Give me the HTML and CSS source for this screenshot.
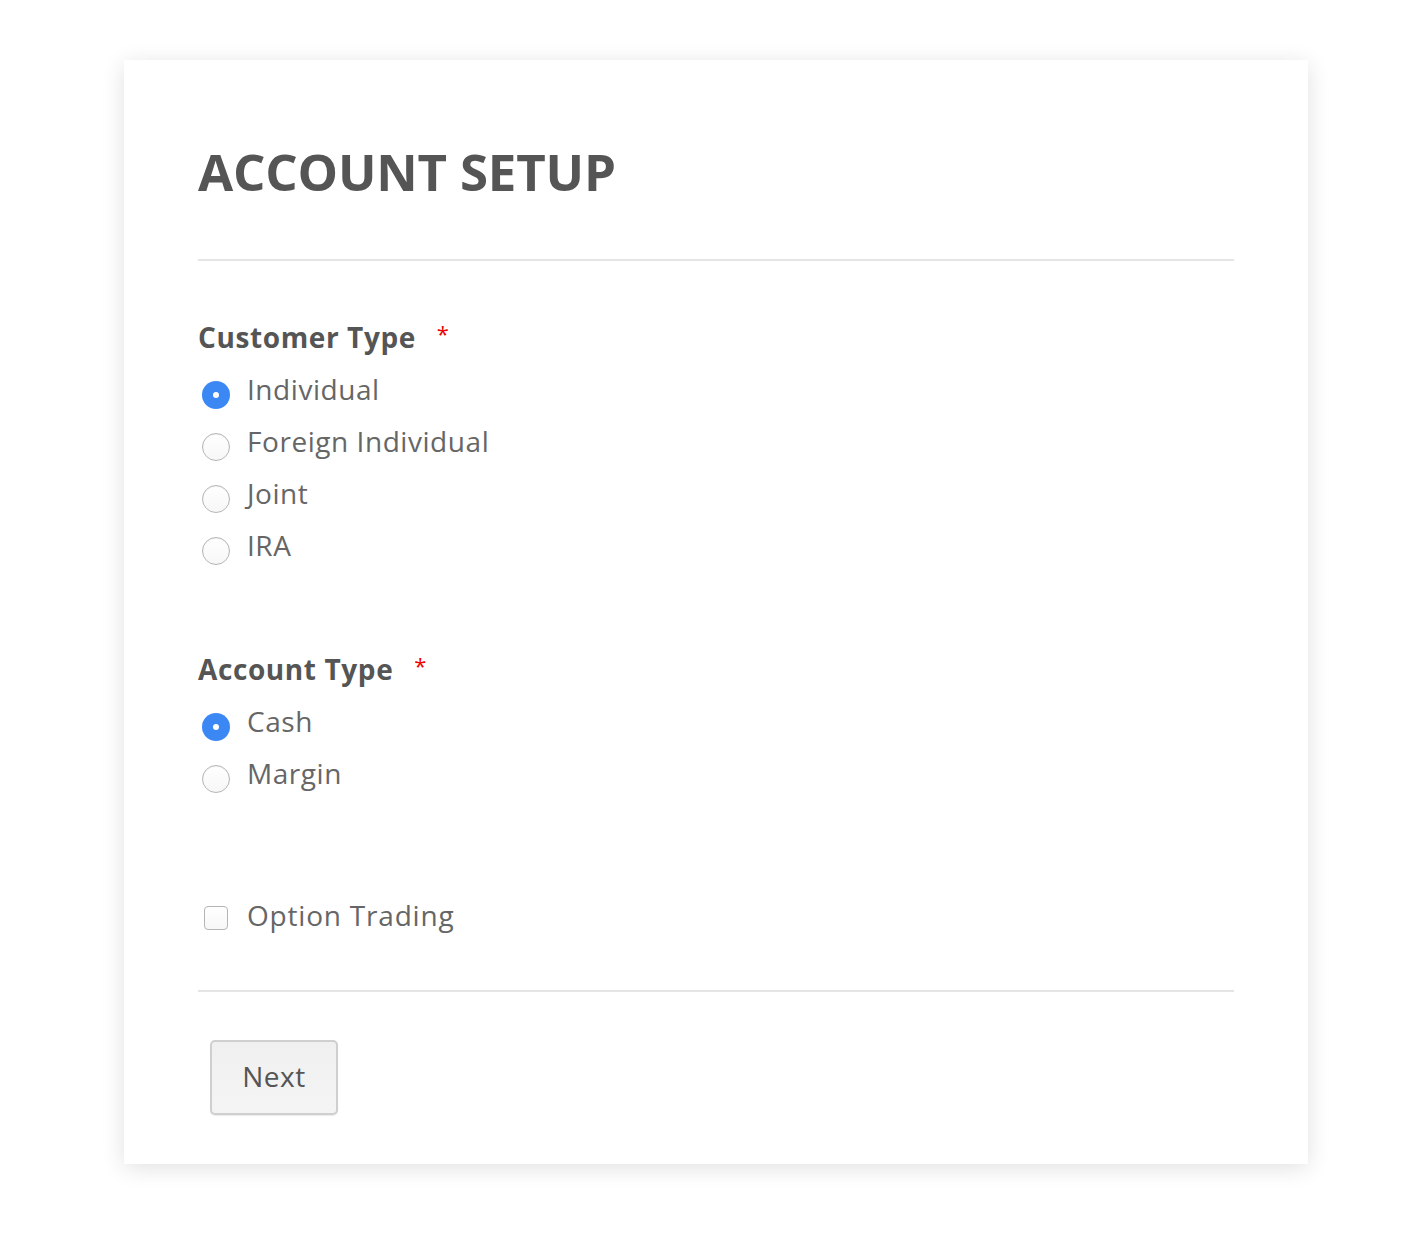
FILE: index.html
```html
<!DOCTYPE html>
<html>
<head>
<meta charset="utf-8">
<link rel="stylesheet" href="styles.css">
</head>
<body>
<div class="card">
  <h1 class="title">ACCOUNT SETUP</h1>
  <hr class="rule rule-top">
  <div class="group">
    <div class="label">Customer Type <span class="req">*</span></div>
    <div class="option"><span class="radio checked"></span><span class="opt-text">Individual</span></div>
    <div class="option"><span class="radio"></span><span class="opt-text">Foreign Individual</span></div>
    <div class="option"><span class="radio"></span><span class="opt-text">Joint</span></div>
    <div class="option"><span class="radio"></span><span class="opt-text">IRA</span></div>
  </div>
  <div class="group group-2">
    <div class="label">Account Type <span class="req">*</span></div>
    <div class="option"><span class="radio checked"></span><span class="opt-text">Cash</span></div>
    <div class="option"><span class="radio"></span><span class="opt-text">Margin</span></div>
  </div>
  <div class="option check-row"><span class="checkbox"></span><span class="opt-text">Option Trading</span></div>
  <hr class="rule rule-bottom">
  <div class="actions"><button class="btn">Next</button></div>
</div>
</body>
</html>
```
FILE: styles.css
```css
html, body { margin: 0; padding: 0; background: #fff; }
body { font-family: "Open Sans", "DejaVu Sans", sans-serif; color: #555; padding-bottom: 74px; }
.card {
  width: 1184px;
  height: 1104px;
  box-sizing: border-box;
  margin: 60px 0 0 124px;
  background: #fff;
  box-shadow: 0 4px 22px rgba(0,0,0,0.12);
  padding: 0 74px;
  display: flex;
  flex-direction: column;
}
.title {
  margin: 0;
  padding-top: 80px;
  font-size: 51px;
  font-weight: 700;
  line-height: 62px;
  color: #555;
  letter-spacing: -0.2px;
}
.rule { border: 0; border-top: 2px solid #e5e5e5; margin: 0; width: 100%; }
.rule-top { margin-top: 57px; }
.group { margin-top: 54px; }
.group-2 { margin-top: 76px; }
.label {
  font-size: 28px;
  font-weight: 700;
  color: #555;
  line-height: 36px;
  margin-bottom: 8px;
  letter-spacing: 0.6px;
}
.req { color: #e00; font-size: 22px; vertical-align: 6px; margin-left: 13px; font-weight: 400; }
.option {
  display: flex;
  align-items: center;
  height: 52px;
}
.opt-text { font-size: 28px; color: #666; line-height: 36px; margin-left: 17px; letter-spacing: 0.55px; }
.radio {
  width: 28px; height: 28px; border-radius: 50%;
  box-sizing: border-box;
  border: 1px solid #b5b5b5;
  background: linear-gradient(#fff, #f7f7f7);
  box-shadow: inset 0 1px 1px rgba(0,0,0,0.06);
  margin-left: 4px;
  margin-top: 12px;
  flex: none;
  position: relative;
}
.radio.checked {
  border: none;
  background: #3b88f5;
  box-shadow: none;
}
.radio.checked::after {
  content: "";
  position: absolute;
  left: 11px; top: 11px;
  width: 6px; height: 6px; border-radius: 50%;
  background: #fff;
}
.check-row { margin-top: 90px; }
.checkbox {
  width: 24px; height: 24px; box-sizing: border-box;
  border: 1px solid #b5b5b5; border-radius: 4px;
  background: linear-gradient(#fff, #f7f7f7);
  margin-left: 6px; margin-top: 6px; flex: none;
}
.check-row .opt-text { margin-left: 19px; letter-spacing: 0.8px; }
.rule-bottom { margin-top: 49px; }
.actions { padding-top: 48px; padding-left: 12px; }
.btn {
  width: 128px; height: 75px;
  box-sizing: border-box;
  border: 2px solid #cfcfcf;
  border-radius: 5px;
  background: linear-gradient(#f0f0f0, #f4f4f4);
  box-shadow: 0 1px 1px rgba(0,0,0,0.08);
  font-family: "Open Sans", "DejaVu Sans", sans-serif;
  font-size: 28px;
  color: #555;
  letter-spacing: 0.5px;
  padding: 0 0 3px 0;
}
```
